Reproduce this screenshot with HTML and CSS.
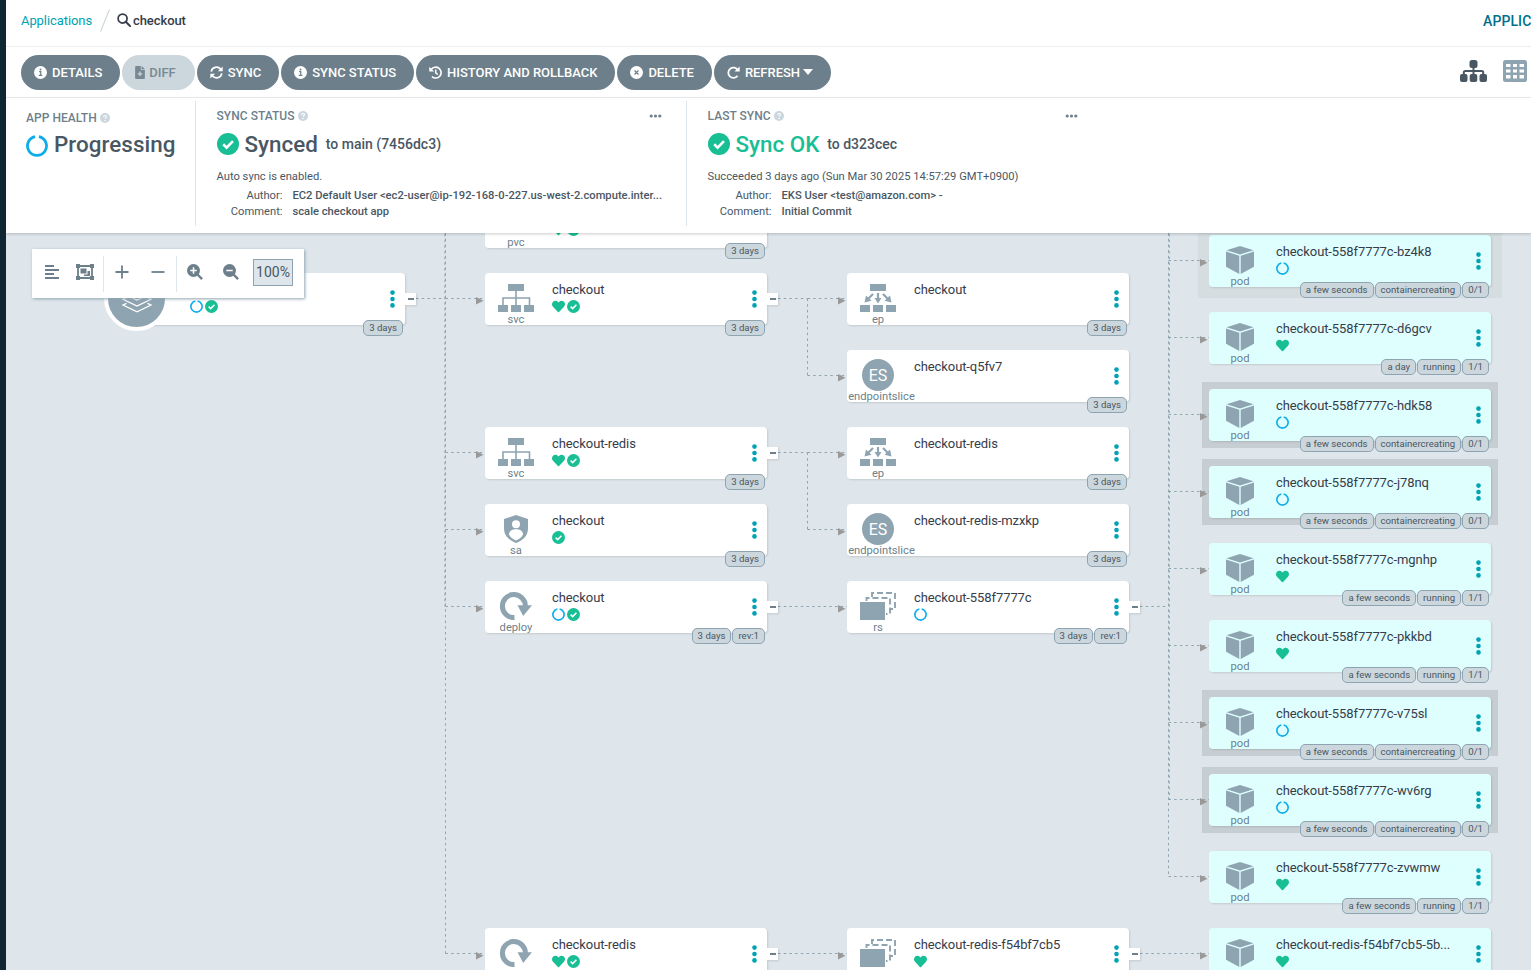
FILE: index.html
```html
<!DOCTYPE html>
<html lang="en">
<head>
    <meta charset="UTF-8">
    <meta name="viewport" content="width=device-width, initial-scale=1.0">
    <title>checkout</title>
    <link rel="stylesheet" href="styles.css">
</head>
<body>
    <svg class="sprite" aria-hidden="true">
        <symbol id="i-search" viewBox="0 0 16 16"><circle cx="6.4" cy="6.4" r="5.1" fill="none" stroke="currentColor" stroke-width="2"/><path d="M10 10l5 5" stroke="currentColor" stroke-width="2.4" stroke-linecap="round"/></symbol>
        <symbol id="i-info" viewBox="0 0 16 16"><circle cx="8" cy="8" r="8" fill="currentColor"/><path class="cut" d="M6.3 6.9h2v4.3M5.9 11.6h4.4" fill="none" stroke-width="1.5"/><circle class="cut-fill" cx="8" cy="4.4" r="1.2"/></symbol>
        <symbol id="i-file" viewBox="0 0 12 16"><path d="M1.2 0H7v4.5h5v10.3a1.2 1.2 0 0 1-1.2 1.2H1.2A1.2 1.2 0 0 1 0 14.8V1.2A1.2 1.2 0 0 1 1.2 0zM8 0l4 3.700H8z" fill="currentColor"/><path class="cut" d="M6 6.800v5.600M3.200 9.600h5.600" stroke-width="1.600"/></symbol>
        <symbol id="i-sync" viewBox="0 0 16 16"><path d="M1.500 7a6.500 6.500 0 0 1 11.600-3M14.500 9a6.500 6.500 0 0 1-11.600 3" fill="none" stroke="currentColor" stroke-width="2.100"/><path d="M15.600.6v6H9.700zM.4 15.400v-6h5.900z" fill="currentColor"/></symbol>
        <symbol id="i-history" viewBox="0 0 16 16"><path d="M2.800 4.200A6.700 6.700 0 1 1 3.600 13" fill="none" stroke="currentColor" stroke-width="2"/><path d="M.3.800v6h6z" fill="currentColor"/><path d="M8.300 4.300v4.200l2.500 2" fill="none" stroke="currentColor" stroke-width="1.800"/></symbol>
        <symbol id="i-cross" viewBox="0 0 16 16"><circle cx="8" cy="8" r="8" fill="currentColor"/><path class="cut" d="M5.600 5.600l4.800 4.800M10.400 5.600l-4.800 4.800" stroke-width="1.500"/></symbol>
        <symbol id="i-redo" viewBox="0 0 16 16"><path d="M13.400 5.200A6.300 6.300 0 1 0 13 12" fill="none" stroke="currentColor" stroke-width="2.200"/><path d="M15.600.5v6.300H9.200z" fill="currentColor"/></symbol>
        <symbol id="i-help" viewBox="0 0 16 16"><circle cx="8" cy="8" r="8" fill="currentColor"/><path d="M5.600 6.200c.2-1.600 1.200-2.200 2.400-2.200 1.400 0 2.400.8 2.400 2 0 1.600-2.300 1.700-2.300 3.200" fill="none" stroke="#fff" stroke-width="1.700"/><circle cx="8" cy="11.900" r="1.200" fill="#fff"/></symbol>
        <symbol id="i-check" viewBox="0 0 16 16"><circle cx="8" cy="8" r="8" fill="currentColor"/><path d="M4.500 8.200l2.500 2.400 4.600-4.700" fill="none" stroke="#fff" stroke-width="1.900"/></symbol>
        <symbol id="i-ring" viewBox="0 0 16 16"><path d="M6.600 1.200a6.900 6.900 0 1 0 2.800 0" fill="none" stroke="currentColor" stroke-width="2"/></symbol>
        <symbol id="i-heart" viewBox="0 0 512 512"><path d="M462.300 62.600C407.500 15.900 326 24.300 275.700 76.200L256 96.500l-19.700-20.300C186.100 24.300 104.500 15.900 49.700 62.600c-62.800 53.600-66.100 149.800-9.900 207.900l193.500 199.800c12.500 12.900 32.800 12.900 45.300 0l193.500-199.800c56.300-58.100 53-154.300-9.800-207.900z" fill="currentColor"/></symbol>
        <symbol id="i-sitemap" viewBox="0 0 27 22"><g fill="currentColor"><rect x="9.500" y="0" width="8" height="8" rx="2.500"/><rect x="0" y="14" width="7.500" height="8" rx="2"/><rect x="9.700" y="14" width="7.600" height="8" rx="2"/><rect x="19.500" y="14" width="7.500" height="8" rx="2"/></g><path d="M13.500 7v8M3.800 15v-2.500q0-1.500 1.500-1.500h16.400q1.500 0 1.500 1.500V15" fill="none" stroke="currentColor" stroke-width="2"/></symbol>
        <symbol id="i-grid" viewBox="0 0 24 22"><rect width="24" height="22" rx="2.500" fill="currentColor"/><path d="M3 4h4.500v3H3zM10 4h4v3h-4zM16.500 4H21v3h-4.500zM3 9.500h4.500v3H3zM10 9.500h4v3h-4zM16.500 9.500H21v3h-4.500zM3 15h4.500v3.500H3zM10 15h4v3.500h-4zM16.500 15H21v3.500h-4.500z" fill="#fff"/></symbol>
        <symbol id="i-align" viewBox="0 0 14 14"><path d="M0 1h9M0 5h14M0 9h9M0 13h14" stroke="currentColor" stroke-width="1.900"/></symbol>
        <symbol id="i-group" viewBox="0 0 18 16"><path d="M2 2h14v12H2z" fill="none" stroke="currentColor" stroke-width="1.800"/><path d="M0 0h4v4H0zM14 0h4v4h-4zM0 12h4v4H0zM14 12h4v4h-4zM4.500 4.500h6v5h-6zM11.500 7h2.500v5H8v-1.500h3.500z" fill="currentColor"/></symbol>
        <symbol id="i-plus" viewBox="0 0 14 14"><path d="M7 .5v13M.5 7h13" stroke="currentColor" stroke-width="1.800"/></symbol>
        <symbol id="i-minus" viewBox="0 0 14 14"><path d="M.5 7h13" stroke="currentColor" stroke-width="1.800"/></symbol>
        <symbol id="i-zoomin" viewBox="0 0 16 16"><circle cx="6.500" cy="6.500" r="6.500" fill="currentColor"/><path d="M10.500 10.500l4.600 4.600" stroke="currentColor" stroke-width="2.400"/><path d="M6.500 3.300v6.400M3.300 6.500h6.400" stroke="#fff" stroke-width="1.500"/></symbol>
        <symbol id="i-zoomout" viewBox="0 0 16 16"><circle cx="6.500" cy="6.500" r="6.500" fill="currentColor"/><path d="M10.500 10.500l4.600 4.600" stroke="currentColor" stroke-width="2.400"/><path d="M3.300 6.500h6.400" stroke="#fff" stroke-width="1.500"/></symbol>
        <symbol id="i-more" viewBox="0 0 12 4"><circle cx="1.700" cy="2" r="1.600" fill="currentColor"/><circle cx="6" cy="2" r="1.600" fill="currentColor"/><circle cx="10.300" cy="2" r="1.600" fill="currentColor"/></symbol>
        <symbol id="i-dots" viewBox="0 0 5 18"><circle cx="2.500" cy="2.600" r="2.300" fill="currentColor"/><circle cx="2.500" cy="9" r="2.300" fill="currentColor"/><circle cx="2.500" cy="15.400" r="2.300" fill="currentColor"/></symbol>
        <symbol id="i-app" viewBox="0 0 32 32"><path d="M16 4l14 6.500L16 17 2 10.500zM5.500 14.500L2 16.300l14 6.700 14-6.700-3.500-1.800M5.500 20.300L2 22l14 6.800L30 22l-3.500-1.700" fill="none" stroke="#fff" stroke-width="1.300"/></symbol>

        <symbol id="k-svc" viewBox="0 0 36 28"><path d="M10 0h16v7H10zM0 21h10v7H0zM13 21h10v7H13zM26 21h10v7H26z" fill="currentColor"/><path d="M18 7v14M5 21v-7h26.500v7" fill="none" stroke="currentColor" stroke-width="1.600"/></symbol>
        <symbol id="k-ep" viewBox="0 0 36 28"><path d="M10 0h16v7H10zM0 21h10v7H0zM13 21h10v7H13zM26 21h10v7H26z" fill="currentColor"/><path d="M13 10l-6 6M18 9v7M23 10l6 6" stroke="currentColor" stroke-width="2.200"/><path d="M4.500 18.500l1.500-7 5.500 5.300zM14.500 14h7L18 19.500zM31.500 18.500l-1.500-7-5.500 5.300z" fill="currentColor"/></symbol>
        <symbol id="k-sa" viewBox="0 0 24 28"><path d="M12 0l12 4v9.500C24 21 18.500 25.500 12 28 5.500 25.500 0 21 0 13.500V4z" fill="currentColor"/><circle cx="12" cy="9.200" r="4" fill="#fff"/><path d="M5 19.500c0-3.500 3-5.300 7-5.300s7 1.800 7 5.300c-1.500 3.300-4.300 5-7 6-2.700-1-5.500-2.700-7-6z" fill="#fff"/></symbol>
        <symbol id="k-deploy" viewBox="0 0 32 28"><path d="M14.500 25.600A11.500 11.500 0 1 1 25.400 14" fill="none" stroke="currentColor" stroke-width="5"/><path d="M17.500 13.300H32l-8.800 10.700z" fill="currentColor"/></symbol>
        <symbol id="k-rs" viewBox="0 0 36 28"><path d="M0 10h25v18H0z" fill="currentColor"/><path d="M12 5V1h23v16h-5" fill="none" stroke="currentColor" stroke-width="1.900" stroke-dasharray="6 3"/><path d="M6.500 9V6H30v16h-4" fill="none" stroke="currentColor" stroke-width="1.900" stroke-dasharray="6 3"/></symbol>
        <symbol id="k-pod" viewBox="0 0 28 28"><path d="M14 0l13.500 4.300L14 8.600.5 4.300zM0 5.600l13.300 4.200V28L0 20.800zM28 5.600L14.700 9.800V28L28 20.800z" fill="currentColor"/></symbol>
    </svg>

    <div class="layout">
        <nav class="sidebar"></nav>
        <main class="page">
            <header class="topbar">
                <a class="topbar-link">Applications</a>
                <svg class="slash" viewBox="0 0 10 22"><path d="M.5 22L9.500 0" stroke="#ccd6dd" stroke-width="1.200"/></svg>
                <svg class="search"><use href="#i-search"/></svg>
                <span class="topbar-name">checkout</span>
                <span class="topbar-title">APPLIC</span>
            </header>

            <div class="toolbar">
                <button class="btn"><svg><use href="#i-info"/></svg>DETAILS</button>
                <button class="btn disabled"><svg class="narrow"><use href="#i-file"/></svg>DIFF</button>
                <button class="btn"><svg><use href="#i-sync"/></svg>SYNC</button>
                <button class="btn"><svg><use href="#i-info"/></svg>SYNC STATUS</button>
                <button class="btn"><svg><use href="#i-history"/></svg>HISTORY AND ROLLBACK</button>
                <button class="btn"><svg><use href="#i-cross"/></svg>DELETE</button>
                <button class="btn"><svg><use href="#i-redo"/></svg>REFRESH<span class="caret"></span></button>
                <div class="views">
                    <svg class="view-tree"><use href="#i-sitemap"/></svg>
                    <svg class="view-grid"><use href="#i-grid"/></svg>
                </div>
            </div>

            <section class="summary">
                <div class="panel panel-health">
                    <div class="panel-label">APP HEALTH<svg><use href="#i-help"/></svg></div>
                    <div class="panel-value"><svg class="blue"><use href="#i-ring"/></svg>Progressing</div>
                </div>
                <div class="panel panel-sync">
                    <div class="panel-label">SYNC STATUS<svg><use href="#i-help"/></svg><svg class="more"><use href="#i-more"/></svg></div>
                    <div class="panel-value"><svg class="green"><use href="#i-check"/></svg>Synced<span class="revision">to main (7456dc3)</span></div>
                    <div class="panel-note">Auto sync is enabled.</div>
                    <dl class="meta">
                        <dt>Author:</dt><dd>EC2 Default User &lt;ec2-user@ip-192-168-0-227.us-west-2.compute.inter...</dd>
                        <dt>Comment:</dt><dd>scale checkout app</dd>
                    </dl>
                </div>
                <div class="panel panel-last">
                    <div class="panel-label">LAST SYNC<svg><use href="#i-help"/></svg><svg class="more"><use href="#i-more"/></svg></div>
                    <div class="panel-value green"><svg><use href="#i-check"/></svg>Sync OK<span class="revision">to d323cec</span></div>
                    <div class="panel-note">Succeeded 3 days ago (Sun Mar 30 2025 14:57:29 GMT+0900)</div>
                    <dl class="meta">
                        <dt>Author:</dt><dd>EKS User &lt;test@amazon.com&gt; -</dd>
                        <dt>Comment:</dt><dd>Initial Commit</dd>
                    </dl>
                </div>
            </section>

            <section class="graph">
                <svg class="edges" id="edges" width="1525" height="737"></svg>
                <div id="nodes"></div>
                <div class="zoombar">
                    <svg class="s14"><use href="#i-align"/></svg>
                    <svg class="s18"><use href="#i-group"/></svg>
                    <i class="sep"></i>
                    <svg class="s14"><use href="#i-plus"/></svg>
                    <svg class="s14 after"><use href="#i-minus"/></svg>
                    <i class="sep sep-wide"></i>
                    <svg class="s16"><use href="#i-zoomin"/></svg>
                    <svg class="s16 after-zoom"><use href="#i-zoomout"/></svg>
                    <span class="zoom-value">100%</span>
                </div>
            </section>
        </main>
    </div>
    <script src="graph.js"></script>
</body>
</html>
```
FILE: styles.css
```css
* {
    box-sizing: border-box;
}
body {
    margin: 0;
    font-family: Roboto, "Liberation Sans", sans-serif;
    font-size: 13px;
    color: #363c4a;
    background-color: #fff;
    overflow: hidden;
}
svg {
    display: block;
    flex: none;
}
.sprite {
    position: absolute;
    width: 0;
    height: 0;
}
.layout {
    display: flex;
    height: 970px;
}
.sidebar {
    width: 6px;
    flex: none;
    background-color: #0f2733;
}
.page {
    flex: 1;
    min-width: 0;
    display: flex;
    flex-direction: column;
    overflow: hidden;
}

/* top bar */
.topbar {
    height: 47px;
    flex: none;
    display: flex;
    align-items: center;
    padding: 0 0 6px 15px;
    border-bottom: 1px solid #eceff1;
    letter-spacing: -.08px;
    white-space: nowrap;
}
.topbar-link {
    color: #00a2b3;
    width: 79px;
}
.slash {
    width: 10px;
    height: 23px;
    margin-right: 7px;
}
.search {
    width: 14px;
    height: 14px;
    margin-right: 2px;
}
.topbar-name {
    font-weight: 500;
}
.topbar-title {
    margin-left: auto;
    width: 48px;
    padding-top: 1px;
    overflow: hidden;
    font-size: 14px;
    font-weight: 500;
    letter-spacing: .1px;
    color: #006f8a;
}

/* action buttons */
.toolbar {
    height: 51px;
    flex: none;
    display: flex;
    align-items: center;
    gap: 2px;
    padding: 0 4px 0 15px;
    border-bottom: 1px solid #eceff1;
}
.btn {
    --cut: #6d7f8b;
    display: flex;
    align-items: center;
    height: 35px;
    padding: 0 18px 0 13px;
    border: none;
    border-radius: 18px;
    background-color: #6d7f8b;
    color: #fff;
    font-family: inherit;
    font-size: 13px;
    font-weight: 500;
    letter-spacing: -.02px;
    white-space: nowrap;
    cursor: pointer;
}
.btn svg {
    width: 13px;
    height: 13px;
    margin-right: 5px;
}
.btn svg.narrow {
    width: 10px;
    margin-right: 4px;
}
.btn.disabled {
    --cut: #ccd6dd;
    padding-right: 19px;
    background-color: #ccd6dd;
    color: #788993;
}
.cut {
    stroke: var(--cut);
}
.cut-fill {
    fill: var(--cut);
}
.caret {
    border: 5px solid transparent;
    border-top: 6px solid #fff;
    border-bottom: none;
    margin-left: 3px;
}
.views {
    margin-left: auto;
    display: flex;
    align-items: center;
    gap: 16px;
    padding-bottom: 2px;
}
.view-tree {
    width: 27px;
    height: 22px;
    color: #495763;
}
.view-grid {
    width: 24px;
    height: 22px;
    color: #8fa4b1;
}

/* status panels */
.summary {
    position: relative;
    z-index: 2;
    height: 135px;
    flex: none;
    display: flex;
    padding: 3px 0 7px;
    background-color: #fff;
    box-shadow: 0 1px 3px rgba(0, 0, 0, .2);
    color: #495763;
}
.panel {
    padding: 8px 24px 0 20.5px;
    border-right: 1px solid #dee6eb;
    white-space: nowrap;
}
.panel-health {
    width: 190px;
    padding: 10px 0 0 20px;
}
.panel-sync {
    width: 491px;
}
.panel-last {
    width: 415px;
    border-right: none;
}
.panel-label {
    display: flex;
    align-items: center;
    height: 14px;
    font-size: 12px;
    font-weight: 500;
    letter-spacing: .04px;
    color: #6d7f8b;
}
.panel-label svg {
    width: 10px;
    height: 10px;
    margin-left: 3px;
    color: #ccd6dd;
}
.panel-label svg.more {
    width: 13px;
    height: 4px;
    margin-left: auto;
    color: #6d7f8b;
}
.panel-value {
    display: flex;
    align-items: center;
    height: 28px;
    margin-top: 7px;
    font-size: 22.4px;
    font-weight: 500;
}
.panel-health .panel-value {
    margin-top: 5px;
    letter-spacing: .05px;
}
.panel-value svg {
    width: 22px;
    height: 22px;
    margin-right: 6px;
}
.panel-health .panel-value svg {
    margin-top: 3px;
}
.revision {
    margin-left: 8px;
    font-size: 14px;
    color: #495763;
}
.panel-note {
    margin-top: 11px;
    font-size: 11.2px;
    line-height: 16px;
}
.meta {
    display: grid;
    grid-template-columns: 66px auto;
    column-gap: 10px;
    margin: 3px 0 0;
    font-size: 11.2px;
    line-height: 16px;
}
.panel-last .meta {
    grid-template-columns: 64px auto;
}
.meta dt {
    text-align: right;
}
.meta dd {
    margin: 0;
    font-weight: 500;
}
.blue {
    color: #0dadea;
}
.green {
    color: #18be94;
}

/* resource graph */
.graph {
    position: relative;
    z-index: 0;
    flex: 1;
    overflow: hidden;
    background-color: #dee6eb;
}
.edges {
    position: absolute;
    left: 0;
    top: 0;
}
.edges path {
    fill: none;
    stroke: #8fa4b1;
    stroke-dasharray: 2.5 3.2;
}
.edges polygon {
    fill: #999;
}
.node {
    position: absolute;
    width: 282px;
    height: 52px;
    display: flex;
    border-radius: 4px;
    background-color: #fff;
    box-shadow: 1px 1px 2px rgba(0, 0, 0, .12);
    white-space: nowrap;
}
.node.pod {
    background-color: #dfffff;
}
.node.pending::before,
.node.fading::before {
    content: "";
    position: absolute;
    z-index: -1;
    inset: -7px;
    background-color: rgba(0, 0, 0, .1);
}
.node.fading::before {
    inset: -11px;
    background-color: rgba(0, 0, 0, .04);
}
.kind {
    width: 62px;
    margin-right: 5px;
    padding-top: 11px;
    display: flex;
    flex-direction: column;
    align-items: center;
    font-size: 11.2px;
    line-height: 15px;
    color: #6d7f8b;
}
.kind svg {
    width: 36px;
    height: 28px;
    color: #8fa4b1;
}
.kind-circle {
    width: 32px;
    height: 32px;
    flex: none;
    margin: -2px 0;
    border-radius: 50%;
    background-color: #8fa4b1;
    color: #fff;
    font-size: 16px;
    line-height: 33px;
    text-align: center;
}
.endpointslice .kind span {
    margin-left: 7px;
}
.app-circle {
    width: 65px;
    height: 65px;
    flex: none;
    margin: -7px 21px 0 -19px;
    border: 4px solid #fff;
    border-radius: 50%;
    background-color: #8fa4b1;
    display: flex;
    align-items: center;
    justify-content: center;
}
.app-circle svg {
    width: 32px;
    height: 32px;
}
.info {
    flex: 1;
    padding-top: 9px;
}
.name {
    height: 16px;
    font-size: 13px;
    line-height: 16px;
    letter-spacing: -.09px;
}
.status {
    display: flex;
    gap: 2px;
    margin-top: 2.3px;
}
.status svg {
    width: 13px;
    height: 13px;
}
.dots {
    width: 5px;
    height: 18px;
    margin: 17.4px 10.5px 0 0;
    color: #00a2b3;
}
.pod .dots {
    margin-top: 16.5px;
}
.tags {
    position: absolute;
    right: 2px;
    bottom: -11px;
    display: flex;
    gap: 1px;
}
.tags span {
    height: 16px;
    padding: 0 5px;
    border: 1px solid #8fa4b1;
    border-radius: 5px;
    background-color: #ccd6dd;
    font-size: 9.6px;
    line-height: 13px;
    color: #495763;
}
.toggle {
    position: absolute;
    left: 282px;
    top: 20px;
    width: 11px;
    height: 12px;
    background-color: #fff;
    box-shadow: 1px 1px 2px rgba(0, 0, 0, .12);
}
.toggle::before {
    content: "";
    display: block;
    width: 6px;
    height: 2px;
    margin: 5px 0 0 2.5px;
    background-color: #6d7f8b;
}

/* floating zoom controls */
.zoombar {
    position: absolute;
    left: 26px;
    top: 16px;
    width: 272px;
    height: 49px;
    display: flex;
    align-items: center;
    padding-left: 13px;
    padding-bottom: 3px;
    background-color: #fff;
    box-shadow: 1px 1px 3px #8fa4b1;
    color: #6d7f8b;
}
.s14 {
    width: 14px;
    height: 14px;
}
.s16 {
    width: 16px;
    height: 16px;
}
.s18 {
    width: 18px;
    height: 16px;
    margin-left: 17px;
}
.sep {
    width: 1px;
    height: 36px;
    margin: 3px 11px 0 9px;
    background-color: #dee6eb;
}
.sep-wide {
    margin: 3px 10px 0 11px;
}
.after {
    margin-left: 22px;
}
.after-zoom {
    margin-left: 20px;
}
.zoom-value {
    width: 40px;
    height: 27px;
    margin-left: 14px;
    border: 1px solid #8fa4b1;
    background-color: #dee6eb;
    font-size: 14px;
    line-height: 25px;
    text-align: center;
    color: #495763;
}
```
FILE: graph.js
```js
const COL = [117, 479, 841, 1203];

const nodes = [
    { col: 0, y: 40, kind: 'app', name: '', status: ['ring', 'check'], tags: ['3 days'], toggle: true },
    { col: 1, y: -37, kind: 'pvc', name: '', status: ['heart', 'check'], tags: ['3 days'] },
    { col: 1, y: 40, kind: 'svc', name: 'checkout', status: ['heart', 'check'], tags: ['3 days'], toggle: true },
    { col: 1, y: 194, kind: 'svc', name: 'checkout-redis', status: ['heart', 'check'], tags: ['3 days'], toggle: true },
    { col: 1, y: 271, kind: 'sa', name: 'checkout', status: ['check'], tags: ['3 days'] },
    { col: 1, y: 348, kind: 'deploy', name: 'checkout', status: ['ring', 'check'], tags: ['3 days', 'rev:1'], toggle: true },
    { col: 1, y: 695, kind: 'deploy', name: 'checkout-redis', status: ['heart', 'check'], tags: [], toggle: true },
    { col: 2, y: 40, kind: 'ep', name: 'checkout', status: [], tags: ['3 days'] },
    { col: 2, y: 117, kind: 'endpointslice', name: 'checkout-q5fv7', status: [], tags: ['3 days'] },
    { col: 2, y: 194, kind: 'ep', name: 'checkout-redis', status: [], tags: ['3 days'] },
    { col: 2, y: 271, kind: 'endpointslice', name: 'checkout-redis-mzxkp', status: [], tags: ['3 days'] },
    { col: 2, y: 348, kind: 'rs', name: 'checkout-558f7777c', status: ['ring'], tags: ['3 days', 'rev:1'], toggle: true },
    { col: 2, y: 695, kind: 'rs', name: 'checkout-redis-f54bf7cb5', status: ['heart'], tags: [], toggle: true },
    { col: 3, y: 2, kind: 'pod', name: 'checkout-558f7777c-bz4k8', status: ['ring'], tags: ['a few seconds', 'containercreating', '0/1'], state: 'fading' },
    { col: 3, y: 79, kind: 'pod', name: 'checkout-558f7777c-d6gcv', status: ['heart'], tags: ['a day', 'running', '1/1'] },
    { col: 3, y: 156, kind: 'pod', name: 'checkout-558f7777c-hdk58', status: ['ring'], tags: ['a few seconds', 'containercreating', '0/1'], state: 'pending' },
    { col: 3, y: 233, kind: 'pod', name: 'checkout-558f7777c-j78nq', status: ['ring'], tags: ['a few seconds', 'containercreating', '0/1'], state: 'pending' },
    { col: 3, y: 310, kind: 'pod', name: 'checkout-558f7777c-mgnhp', status: ['heart'], tags: ['a few seconds', 'running', '1/1'] },
    { col: 3, y: 387, kind: 'pod', name: 'checkout-558f7777c-pkkbd', status: ['heart'], tags: ['a few seconds', 'running', '1/1'] },
    { col: 3, y: 464, kind: 'pod', name: 'checkout-558f7777c-v75sl', status: ['ring'], tags: ['a few seconds', 'containercreating', '0/1'], state: 'pending' },
    { col: 3, y: 541, kind: 'pod', name: 'checkout-558f7777c-wv6rg', status: ['ring'], tags: ['a few seconds', 'containercreating', '0/1'], state: 'pending' },
    { col: 3, y: 618, kind: 'pod', name: 'checkout-558f7777c-zvwmw', status: ['heart'], tags: ['a few seconds', 'running', '1/1'] },
    { col: 3, y: 695, kind: 'pod', name: 'checkout-redis-f54bf7cb5-5b...', status: ['heart'], tags: [] },
];

// each edge: start x, trunk x, trunk top, trunk bottom, then the rows it feeds
const edges = [
    { from: [410, 65.5], trunk: [439.5, 0, 720.5], to: 479, rows: [65.5, 219.5, 296.5, 373.5, 720.5] },
    { from: [772, 65.5], trunk: [801.5, 65.5, 142.5], to: 841, rows: [65.5, 142.5] },
    { from: [772, 219.5], trunk: [801.5, 219.5, 296.5], to: 841, rows: [219.5, 296.5] },
    { from: [772, 373.5], to: 841, rows: [373.5] },
    { from: [772, 720.5], to: 841, rows: [720.5] },
    { from: [1134, 373.5], trunk: [1162.5, 0, 643.5], to: 1203, rows: [27.5, 104.5, 181.5, 258.5, 335.5, 412.5, 489.5, 566.5, 643.5] },
    { from: [1134, 720.5], to: 1203, rows: [720.5] },
];

function kindIcon(kind) {
    if (kind === 'endpointslice') return '<div class="kind-circle">ES</div>';
    if (kind === 'pvc') return '<svg></svg>';
    return `<svg><use href="#k-${kind}"/></svg>`;
}

function renderNode(n) {
    const color = { ring: 'blue', heart: 'green', check: 'green' };
    const left = n.kind === 'app'
        ? '<div class="app-circle"><svg><use href="#i-app"/></svg></div>'
        : `<div class="kind">${kindIcon(n.kind)}<span>${n.kind}</span></div>`;
    return `<div class="node ${n.kind} ${n.state || ''}" style="left:${COL[n.col]}px;top:${n.y}px">
        ${left}
        <div class="info">
            <div class="name">${n.name}</div>
            <div class="status">${n.status.map(s => `<svg class="${color[s]}"><use href="#i-${s}"/></svg>`).join('')}</div>
        </div>
        <svg class="dots"><use href="#i-dots"/></svg>
        <div class="tags">${n.tags.map(t => `<span>${t}</span>`).join('')}</div>
        ${n.toggle ? '<div class="toggle"></div>' : ''}
    </div>`;
}

function renderEdge(e) {
    let d = '';
    let arrows = '';
    const start = e.trunk ? e.trunk[0] : e.from[0];
    if (e.trunk) {
        d += `M${e.from[0]} ${e.from[1]}H${e.trunk[0]}M${e.trunk[0]} ${e.trunk[1]}V${e.trunk[2]}`;
        // long trunks are several overlapping lines
        if (e.rows.length > 2) {
            d += `M${e.trunk[0] + (e.to > 1000 ? 0.8 : -0.6)} ${e.trunk[1] + 1}V${e.rows[e.rows.length - 2]}`;
        }
    }
    e.rows.forEach(y => {
        d += `M${start} ${y}H${e.to}`;
        arrows += `<polygon points="${e.to - 9},${y - 1.5} ${e.to - 9},${y + 6} ${e.to - 1.5},${y + 2.2}"/>`;
    });
    return `<path d="${d}"/>${arrows}`;
}

document.getElementById('edges').innerHTML = edges.map(renderEdge).join('');
document.getElementById('nodes').innerHTML = nodes.map(renderNode).join('');
```
